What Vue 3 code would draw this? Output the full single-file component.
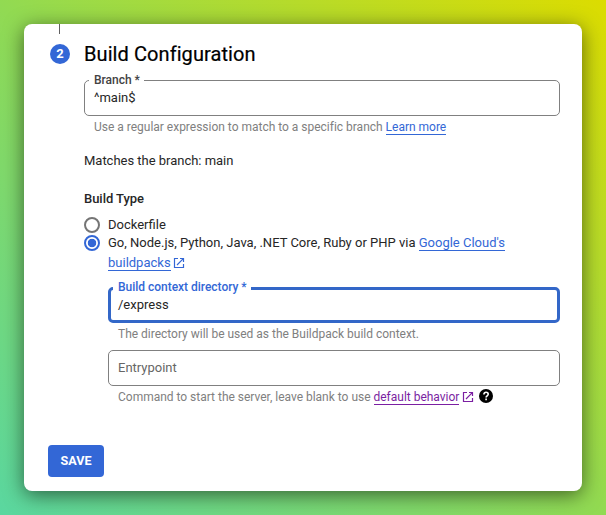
<script setup>
import { ref } from 'vue'

const branch = ref('^main$')
const contextDir = ref('/express')
</script>

<template>
  <main class="backdrop">
    <section class="card">
      <div class="step">
        <div class="rail">
          <span class="connector"></span>
          <span class="badge">2</span>
        </div>
        <div class="content">
          <h2 class="title">Build Configuration</h2>
          <div class="field">
            <span class="label branch-label">Branch *</span>
            <span class="value">{{ branch }}</span>
          </div>
          <p class="hint branch-hint">Use a regular expression to match to a specific branch <a class="link">Learn more</a></p>
          <p class="match">Matches the branch: main</p>
          <h3 class="subtitle">Build Type</h3>
          <div class="option">
            <span class="radio"></span>
            <span class="option-text docker">Dockerfile</span>
          </div>
          <div class="option second">
            <span class="radio checked"></span>
            <span class="option-text packs">Go, Node.js, Python, Java, .NET Core, Ruby or PHP via <a class="link">Google Cloud's</a><br><a class="link">buildpacks</a><svg class="ext" viewBox="0 0 12 12"><path d="M5 1.5H1.5v9h9V7M7 1.5h3.5V5M10.3 1.7L4 8" /></svg></span>
          </div>
          <div class="nested">
            <div class="field focused">
              <span class="label dir-label">Build context directory *</span>
              <span class="value dir">{{ contextDir }}</span>
            </div>
            <p class="hint dir-hint">The directory will be used as the Buildpack build context.</p>
            <div class="field entry">
              <span class="placeholder">Entrypoint</span>
            </div>
            <p class="hint entry-hint">Command to start the server, leave blank to use <a class="link visited">default behavior</a><svg class="ext visited" viewBox="0 0 12 12"><path d="M5 1.5H1.5v9h9V7M7 1.5h3.5V5M10.3 1.7L4 8" /></svg><svg class="help" viewBox="0 0 14 14"><circle cx="7" cy="7" r="7" /><path d="M4.9 5.4C4.9 4.1 5.8 3.3 7 3.3s2.2.8 2.2 2c0 1.5-2.1 1.6-2.1 3.2M7.1 9.6v1.7" /></svg></p>
          </div>
        </div>
      </div>
      <button class="save">SAVE</button>
    </section>
  </main>
</template>

<style>
body {
  margin: 0;
}
</style>

<style scoped>
.backdrop {
  box-sizing: border-box;
  width: 606px;
  height: 515px;
  padding: 24px;
  overflow: hidden;
  background: linear-gradient(to top right, #5ad7a0 0%, #92da52 50%, #dcdc00 100%);
  font-family: Roboto, "Liberation Sans", sans-serif;
  color: #262626;
}
.card {
  box-sizing: border-box;
  width: 558px;
  height: 467px;
  border-radius: 8px;
  background: #fff;
  box-shadow: 0 4px 20px rgba(0, 0, 0, 0.55);
}
.step {
  display: flex;
  gap: 14px;
  height: 421px;
  padding-left: 26px;
}
.rail {
  display: flex;
  flex-direction: column;
  align-items: center;
  gap: 10px;
  width: 20px;
}
.connector {
  width: 1px;
  height: 10px;
  margin-right: 1px;
  background: #616161;
}
.badge {
  width: 20px;
  height: 20px;
  border-radius: 50%;
  background: #3367d6;
  color: #fff;
  font-size: 13px;
  font-weight: 700;
  line-height: 20px;
  text-align: center;
}
.content {
  width: 476px;
  padding-top: 18px;
  white-space: nowrap;
}
.title {
  margin: 0 0 14px;
  font-size: 20px;
  font-weight: 400;
  letter-spacing: 0.08px;
  line-height: 24px;
  color: #000;
  -webkit-text-stroke: 0.2px #000;
}
.field {
  position: relative;
  box-sizing: border-box;
  height: 36px;
  padding: 9px 9px 0;
  border: 1px solid #808080;
  border-radius: 5px;
}
.label {
  position: absolute;
  top: -9px;
  left: 4px;
  padding: 0 4px 0 5px;
  background: #fff;
  font-size: 12px;
  font-weight: 500;
  line-height: 16px;
  letter-spacing: -0.02px;
  color: #424242;
}
.value,
.placeholder {
  display: block;
  font-size: 13px;
  line-height: 16px;
}
.placeholder {
  color: #666;
}
.focused {
  padding: 7px 7px 0;
  border: 3px solid #3367c8;
}
.focused .label {
  top: -11px;
  left: 2px;
  color: #3367d6;
}
.hint {
  margin: 3px 0 0 10px;
  font-size: 12px;
  line-height: 16px;
  letter-spacing: -0.01px;
  color: #808080;
}
.link {
  color: #3367d6;
  border-bottom: 1px solid #3367d6;
}
.visited {
  color: #7b1fa2;
  border-color: #7b1fa2;
}
.match {
  margin: 18px 0 22px;
  font-size: 13px;
  line-height: 16px;
  letter-spacing: -0.02px;
}
.subtitle {
  margin: 0 0 9px;
  font-size: 13px;
  font-weight: 500;
  line-height: 16px;
  letter-spacing: -0.04px;
}
.option {
  display: flex;
  gap: 8px;
  height: 17px;
  padding-top: 1px;
}
.second {
  height: 52px;
}
.radio {
  box-sizing: border-box;
  width: 16px;
  height: 16px;
  border: 2px solid #757575;
  border-radius: 50%;
}
.checked {
  border-color: #3367d6;
  background: radial-gradient(circle, #3367d6 3.9px, transparent 4.6px);
}
.option-text {
  margin-top: -2px;
  font-size: 13px;
  line-height: 20px;
}
.ext {
  width: 12px;
  height: 12px;
  margin-left: 2px;
  color: #3367d6;
  vertical-align: -2px;
  fill: none;
  stroke: currentColor;
  stroke-width: 1.2;
}
.ext.visited {
  margin-left: 3px;
  color: #7b1fa2;
}
.nested {
  padding-left: 24px;
}
.entry {
  margin-top: 8px;
}
.help {
  width: 14px;
  height: 14px;
  margin-left: 5px;
  vertical-align: -2px;
}
.help path {
  fill: none;
  stroke: #fff;
  stroke-width: 1.6;
}
.save {
  display: block;
  width: 56px;
  height: 32px;
  margin-left: 24px;
  padding: 0;
  border: 0;
  border-radius: 4px;
  background: #3367d6;
  color: #fff;
  font: 700 12.6px/32px Roboto, "Liberation Sans", sans-serif;
}
</style>
